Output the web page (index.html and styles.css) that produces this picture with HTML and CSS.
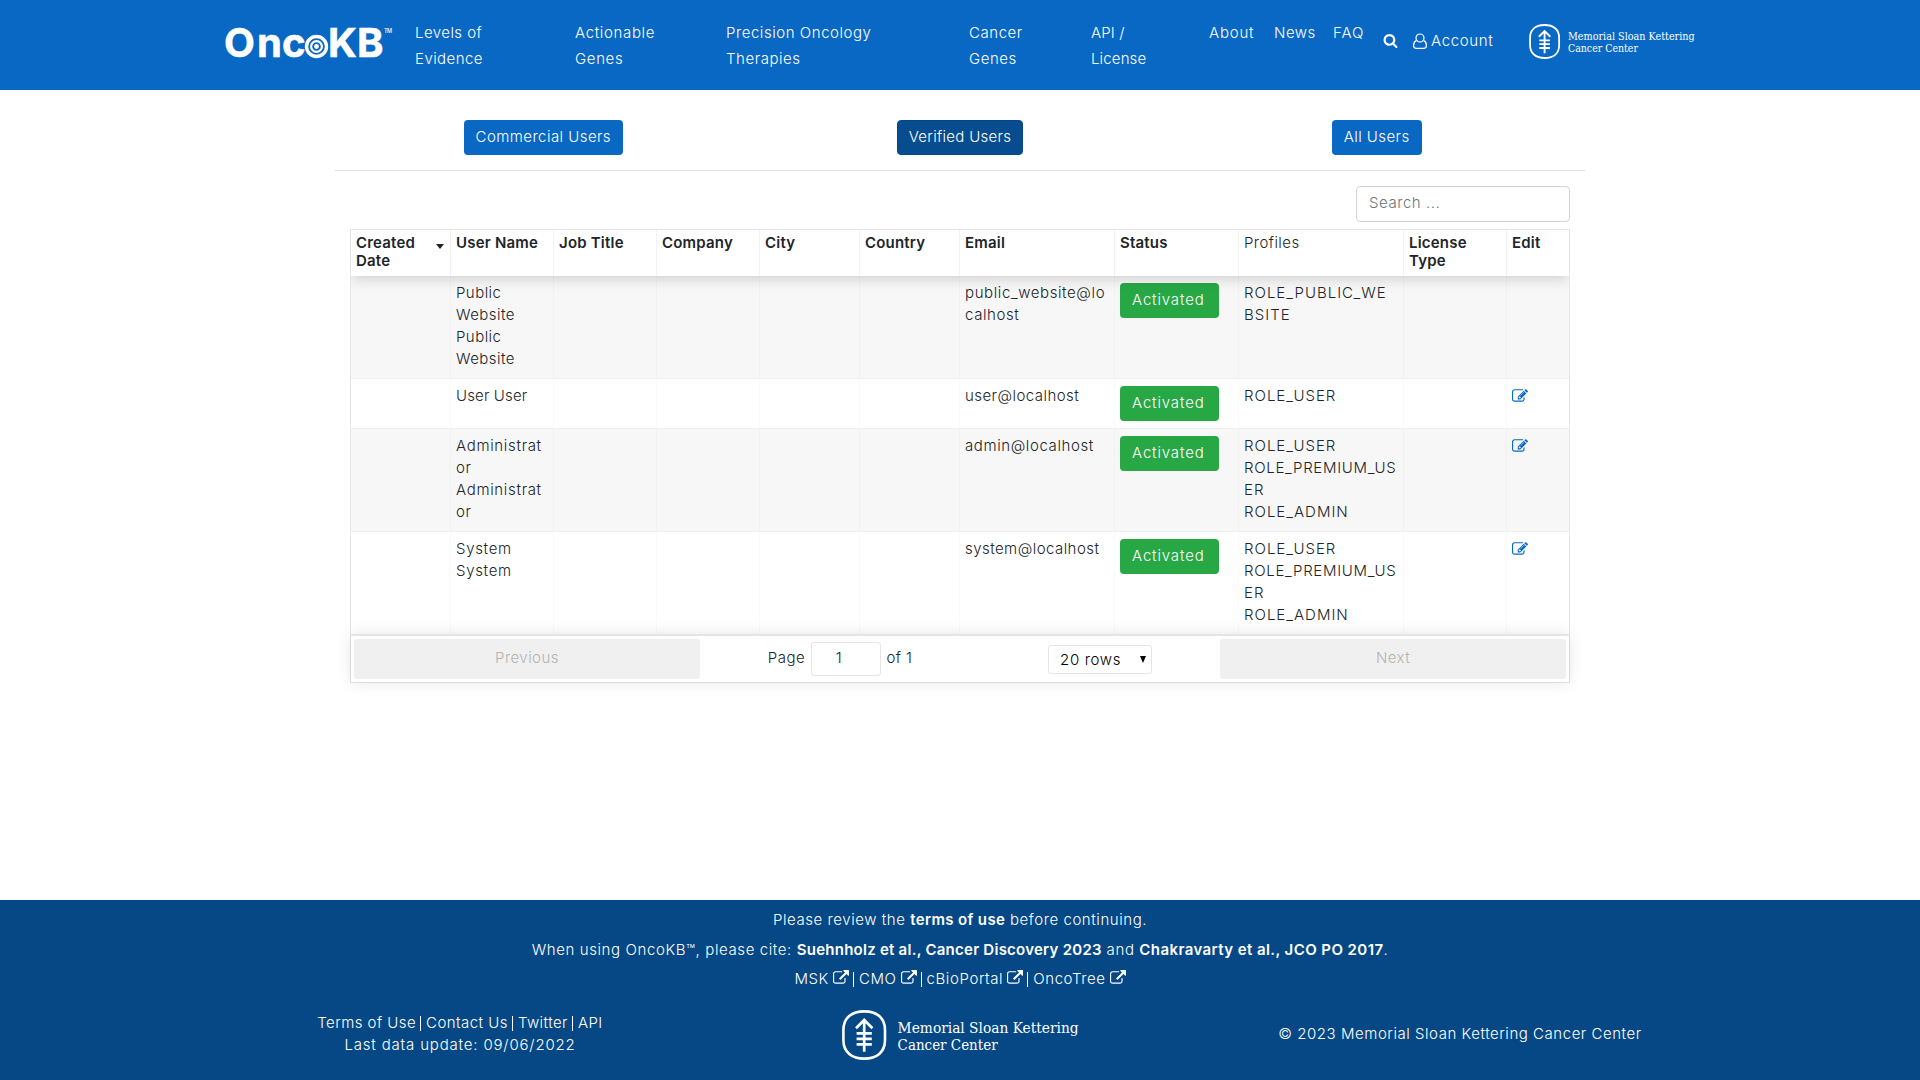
FILE: index.html
```html
<!DOCTYPE html>
<html lang="en">
<head>
<meta charset="utf-8">
<title>OncoKB Users</title>
<link rel="stylesheet" href="styles.css">
</head>
<body>
<svg class="defs" width="0" height="0">
  <symbol id="edit" viewBox="0 0 1792 1792"><path d="M888 1184l116-116-152-152-116 116v56h96v96h56zm440-720q-16-16-33 1l-350 350q-17 17-1 33t33-1l350-350q17-17 1-33zm80 594v190q0 119-84.5 203.5t-203.5 84.5h-832q-119 0-203.5-84.5t-84.5-203.5v-832q0-119 84.5-203.5t203.5-84.5h832q63 0 117 25 15 7 18 23 3 17-9 29l-49 49q-14 14-32 8-23-6-45-6h-832q-66 0-113 47t-47 113v832q0 66 47 113t113 47h832q66 0 113-47t47-113v-126q0-13 9-22l64-64q15-15 35-7t20 29zm-96-738l288 288-672 672h-288v-288zm444 132l-92 92-288-288 92-92q28-28 68-28t68 28l152 152q28 28 28 68t-28 68z"/></symbol>
  <symbol id="ext" viewBox="0 0 1792 1792"><path d="M1408 928v320q0 119-84.5 203.5t-203.5 84.5h-832q-119 0-203.5-84.5t-84.5-203.5v-832q0-119 84.5-203.5t203.5-84.5h704q14 0 23 9t9 23v64q0 14-9 23t-23 9h-704q-66 0-113 47t-47 113v832q0 66 47 113t113 47h832q66 0 113-47t47-113v-320q0-14 9-23t23-9h64q14 0 23 9t9 23zm384-864v512q0 26-19 45t-45 19-45-19l-176-176-652 652q-10 10-23 10t-23-10l-114-114q-10-10-10-23t10-23l652-652-176-176q-19-19-19-45t19-45 45-19h512q26 0 45 19t19 45z"/></symbol>
  <symbol id="msk-mark" viewBox="0 0 45 50">
    <path d="M22.3 1.4C34.6 1.4 43 7.6 43 20V30C43 42.4 34.6 48.6 22.3 48.6S1.4 42.4 1.4 30V20C1.4 7.6 10 1.4 22.3 1.4Z" fill="none" stroke="#fff" stroke-width="2.6"/>
    <path d="M22.2 41.8V10M14 18.2l8.2-8.2 8.2 8.2M14.6 23.4h15.2M14.6 28.8h15.2M14.6 34.3h15.2" fill="none" stroke="#fff" stroke-width="2.7"/>
  </symbol>
</svg>
<header class="header">
  <svg class="logo" width="170" height="40" viewBox="0 0 170 40">
    <text class="logo-text" y="37.2"><tspan x="-1">O</tspan><tspan x="32">n</tspan><tspan x="57">c</tspan><tspan x="103">K</tspan><tspan x="132">B</tspan></text>
    <g fill="none" stroke="#fff"><circle cx="91.5" cy="26.5" r="10" stroke-width="3.4"/><circle cx="91.5" cy="26.5" r="5.4" stroke-width="2.2"/></g><circle cx="91.5" cy="26.5" r="2.4" fill="#fff"/>
    <text class="logo-tm" x="159" y="12.5" textLength="8">TM</text>
  </svg>
  <nav class="nav">
    <a class="n1">Levels of<br>Evidence</a>
    <a class="n2">Actionable<br>Genes</a>
    <a class="n3">Precision Oncology<br>Therapies</a>
    <a class="n4">Cancer<br>Genes</a>
    <a class="n5">API /<br>License</a>
    <a class="n6">About</a>
    <a class="n7">News</a>
    <a class="n8">FAQ</a>
  </nav>
  <svg class="search-icon" width="15" height="15" viewBox="0 0 1792 1792"><path d="M1216 832q0-185-131.5-316.5t-316.5-131.5-316.5 131.5-131.5 316.5 131.5 316.5 316.5 131.5 316.5-131.5 131.5-316.5zm512 832q0 52-38 90t-90 38q-54 0-90-38l-343-342q-179 124-399 124-143 0-273.5-55.5t-225-150-150-225-55.5-273.5 55.5-273.5 150-225 225-150 273.5-55.5 273.5 55.5 225 150 150 225 55.5 273.5q0 220-124 399l343 343q37 37 37 90z"/></svg>
  <a class="account"><svg width="14" height="16" viewBox="0 0 14 16"><path d="M3.3 7.6C1.4 8.4.6 10.4.6 12.6c0 1.6.9 2.7 2.2 2.7h8.4c1.3 0 2.2-1.1 2.2-2.7 0-2.2-.8-4.2-2.7-5" /><circle cx="7" cy="5" r="4"/></svg><span>Account</span></a>
  <svg class="msk-top" width="166" height="35" viewBox="0 0 237 50">
    <use href="#msk-mark" width="45" height="50"/>
    <text class="msk-text" x="55.6" y="22.6" textLength="181" lengthAdjust="spacingAndGlyphs">Memorial Sloan Kettering</text>
    <text class="msk-text" x="55.6" y="39.6" textLength="100" lengthAdjust="spacingAndGlyphs">Cancer Center</text>
  </svg>
</header>

<main class="main">
  <div class="tabs">
    <div><a class="btn">Commercial Users</a></div>
    <div><a class="btn active">Verified Users</a></div>
    <div><a class="btn">All Users</a></div>
  </div>
  <div class="panel">
    <input class="search" placeholder="Search ...">
    <div class="table">
      <div class="row head">
        <div class="sorted"><span>Created Date</span><i class="caret"></i></div><div>User Name</div><div>Job Title</div><div>Company</div><div>City</div><div>Country</div><div>Email</div><div>Status</div><div class="light">Profiles</div><div>License Type</div><div>Edit</div>
      </div>
      <div class="row tall odd">
        <div></div><div>Public<br>Website<br>Public<br>Website</div><div></div><div></div><div></div><div></div><div class="email">public_website@lo<br>calhost</div><div class="st"><a class="btn green">Activated</a></div><div class="roles">ROLE_PUBLIC_WE<br>BSITE</div><div></div><div></div>
      </div>
      <div class="row">
        <div></div><div class="tight">User User</div><div></div><div></div><div></div><div></div><div>user@localhost</div><div class="st"><a class="btn green">Activated</a></div><div class="roles">ROLE_USER</div><div></div><div><svg class="edit" width="16" height="16"><use href="#edit"/></svg></div>
      </div>
      <div class="row tall odd">
        <div></div><div class="wide">Administrat<br>or<br>Administrat<br>or</div><div></div><div></div><div></div><div></div><div class="email">admin@localhost</div><div class="st"><a class="btn green">Activated</a></div><div class="roles">ROLE_USER<br><span class="premium">ROLE_PREMIUM_US</span><br>ER<br>ROLE_ADMIN</div><div></div><div><svg class="edit" width="16" height="16"><use href="#edit"/></svg></div>
      </div>
      <div class="row tall">
        <div></div><div class="wide">System<br>System</div><div></div><div></div><div></div><div></div><div>system@localhost</div><div class="st"><a class="btn green">Activated</a></div><div class="roles">ROLE_USER<br><span class="premium">ROLE_PREMIUM_US</span><br>ER<br>ROLE_ADMIN</div><div></div><div><svg class="edit" width="16" height="16"><use href="#edit"/></svg></div>
      </div>
      <div class="pager">
        <button class="pg" disabled>Previous</button>
        <div class="pinfo"><span class="page">Page <b class="num">1</b> of 1</span><span class="select">20 rows<i></i></span></div>
        <button class="pg" disabled>Next</button>
      </div>
    </div>
  </div>
</main>

<footer class="footer">
  <p class="f1">Please review the <b>terms of use</b> before continuing.</p>
  <p class="f2">When using OncoKB™, please cite: <b>Suehnholz et al., Cancer Discovery 2023</b> and <b class="cite">Chakravarty et al., JCO PO 2017</b>.</p>
  <p class="f3 links"><a>MSK <svg class="ext"><use href="#ext"/></svg></a><a>CMO <svg class="ext"><use href="#ext"/></svg></a><a>cBioPortal <svg class="ext"><use href="#ext"/></svg></a><a>OncoTree <svg class="ext"><use href="#ext"/></svg></a></p>
  <div class="fcols">
    <div class="fleft"><p class="links"><a>Terms of Use</a><a>Contact Us</a><a>Twitter</a><a>API</a></p><p class="update">Last data update: 09/06/2022</p></div>
    <div>
      <svg width="237" height="50" viewBox="0 0 237 50">
        <use href="#msk-mark" width="45" height="50"/>
        <text class="msk-text" x="55.6" y="22.6" textLength="181" lengthAdjust="spacingAndGlyphs">Memorial Sloan Kettering</text>
        <text class="msk-text" x="55.6" y="39.6" textLength="100" lengthAdjust="spacingAndGlyphs">Cancer Center</text>
      </svg>
    </div>
    <div class="fright">© 2023 Memorial Sloan Kettering Cancer Center</div>
  </div>
</footer>
</body>
</html>
```
FILE: styles.css
```css
* { box-sizing: border-box; }
body { margin: 0; height: 1080px; display: flex; flex-direction: column; font: 350 15px/22px Inter, "Liberation Sans", sans-serif; letter-spacing: .45px; color: #212529; background: #fff; }
p { margin: 0; }
b { font-weight: 600; letter-spacing: .35px; }
.defs { position: absolute; }
.header { height: 90px; background: #0968c3; color: #fff; display: flex; align-items: flex-start; padding-left: 225px; }
.logo { width: 170px; margin: 20px 20px 0 0; flex: none; overflow: visible; }
.logo-text { font: 700 40px Inter, sans-serif; letter-spacing: 0; fill: #fff; stroke: #fff; stroke-width: .6px; }
.logo-tm { font: 500 5.5px Inter, sans-serif; letter-spacing: 0; fill: #fff; }
.nav { display: flex; padding-top: 20px; line-height: 26px; white-space: nowrap; }
.n1 { width: 160px; }
.n2 { width: 151px; letter-spacing: .65px; }
.n3 { width: 243px; letter-spacing: .55px; }
.n4 { width: 122px; letter-spacing: .55px; }
.n5 { width: 118px; letter-spacing: .15px; }
.n6 { width: 65px; letter-spacing: .8px; }
.n7 { width: 59px; letter-spacing: .5px; }
.n8 { width: 50px; letter-spacing: 1px; }
.search-icon { fill: #fff; margin-top: 33px; flex: none; }
.account { display: flex; gap: 4px; margin: 28px 0 0 15px; width: 116px; line-height: 26px; letter-spacing: .65px; }
.account svg { margin-top: 5px; fill: none; stroke: #fff; stroke-width: 1.2; }
.msk-top { margin-top: 24px; flex: none; }
.msk-text { font: 400 14.5px "DejaVu Serif", serif; letter-spacing: 0; fill: #fff; }
.main { width: 1250px; margin: 0 auto; flex: 1; }
.tabs { display: grid; grid-template-columns: repeat(3, 1fr); text-align: center; padding: 30px 0 15px; border-bottom: 1px solid #dee2e6; }
.btn { display: inline-block; height: 35px; padding: 0 12px; line-height: 33px; border-radius: 4px; background: #0968c3; color: #fff; vertical-align: top; white-space: nowrap; }
.btn.active { background: #074c8f; border: 1px solid #064885; line-height: 31px; padding: 0 11px; letter-spacing: .3px; }
.btn.green { background: #28a745; width: 99px; letter-spacing: .85px; }
.panel { padding: 15px 15px 0; display: flex; flex-direction: column; align-items: flex-end; }
.search { width: 214px; height: 36px; border: 1px solid #ced4da; border-radius: 4px; padding: 0 12px 3px; font: inherit; letter-spacing: .55px; }
.search::placeholder { color: #6c757d; opacity: 1; }
.table { width: 1220px; margin-top: 7px; border: 1px solid rgba(0,0,0,.1); }
.row { display: grid; grid-template-columns: 100px 103px 103px 103px 100px 100px 155px 124px 165px 103px 62px; min-height: 50px; border-bottom: 1px solid #f0f0f0; }
.row > div { padding: 6px 4px 7px 5px; border-right: 1px solid rgba(0,0,0,.02); white-space: nowrap; }
.row > div:last-child { border-right: 0; }
.row.tall { height: 103px; }
.row.odd { background: #f7f7f7; }
.row > .st { padding-top: 7px; }
.row > .roles { letter-spacing: 1px; }
.premium { letter-spacing: .7px; }
.row > .tight { letter-spacing: .15px; }
.row > .wide { letter-spacing: .68px; }
.row > .email { letter-spacing: .6px; }
.row.head { height: 46px; min-height: 46px; border: 0; font-weight: 600; letter-spacing: .2px; line-height: 18px; box-shadow: 0 2px 15px rgba(0,0,0,.18); clip-path: inset(0 0 -20px 0); position: relative; }
.row.head > div { padding: 4px 5px; border-color: rgba(0,0,0,.05); white-space: normal; }
.row.head > .light { font-weight: 350; letter-spacing: .45px; }
.row.head > .sorted { display: flex; justify-content: space-between; }
.caret { border: 4.5px solid transparent; border-top: 5px solid #212529; border-bottom: 0; height: 5px; margin: 10px 1px 0 0; }
.edit { fill: #0968c3; display: block; margin-top: 3px; }
.pager { margin-top: -1px; height: 48px; position: relative; background: #fff; border-top: 2px solid rgba(0,0,0,.1); box-shadow: 0 0 15px rgba(0,0,0,.1); display: flex; justify-content: space-between; padding: 3px; }
.pg { width: 346px; height: 40px; border: 0; border-radius: 3px; background: #f0f0f0; color: #b3b3b3; font: inherit; letter-spacing: inherit; padding: 0 0 2px; }
.pinfo { flex: 1; display: flex; justify-content: space-around; }
.page { line-height: 38px; }
.num { display: inline-block; width: 70px; height: 34px; border: 1px solid rgba(0,0,0,.1); border-radius: 3px; font-weight: 350; padding-left: 24px; line-height: 30px; margin: 0 1px; }
.select { margin-top: 6px; width: 104px; height: 29px; border: 1px solid rgba(0,0,0,.1); border-radius: 3px; color: #000; display: flex; justify-content: space-between; line-height: 28px; padding: 0 5px 0 11px; letter-spacing: .65px; }
.select i { border: 3px solid transparent; border-top: 7px solid #000; border-bottom: 0; height: 7px; margin-top: 10px; }
.footer { height: 180px; background: #064885; color: #fff; text-align: center; padding-top: 7px; }
.footer p { white-space: nowrap; }
.f1, .f2 { height: 30px; line-height: 26px; }
.f1 { letter-spacing: .57px; }
.f2 { letter-spacing: .6px; }
.f2 b { letter-spacing: .25px; }
.f2 .cite { letter-spacing: .42px; }
.links { display: flex; justify-content: center; }
.links a { position: relative; display: flex; gap: 4px; }
.links a + a { margin-left: 4px; padding-left: 6px; }
.links a + a::before { content: ""; position: absolute; left: 0; top: 4px; width: 1px; height: 15px; background: #fff; }
.f3 { margin-top: 1px; height: 42px; letter-spacing: .6px; }
.ext { width: 16px; height: 16px; fill: #fff; margin-top: 2px; }
.fcols { width: 1500px; margin: 0 auto; display: grid; grid-template-columns: repeat(3, 1fr); }
.fleft { padding-top: 2px; }
.fright { padding-top: 13px; letter-spacing: .54px; }
.update { letter-spacing: .83px; }
```
